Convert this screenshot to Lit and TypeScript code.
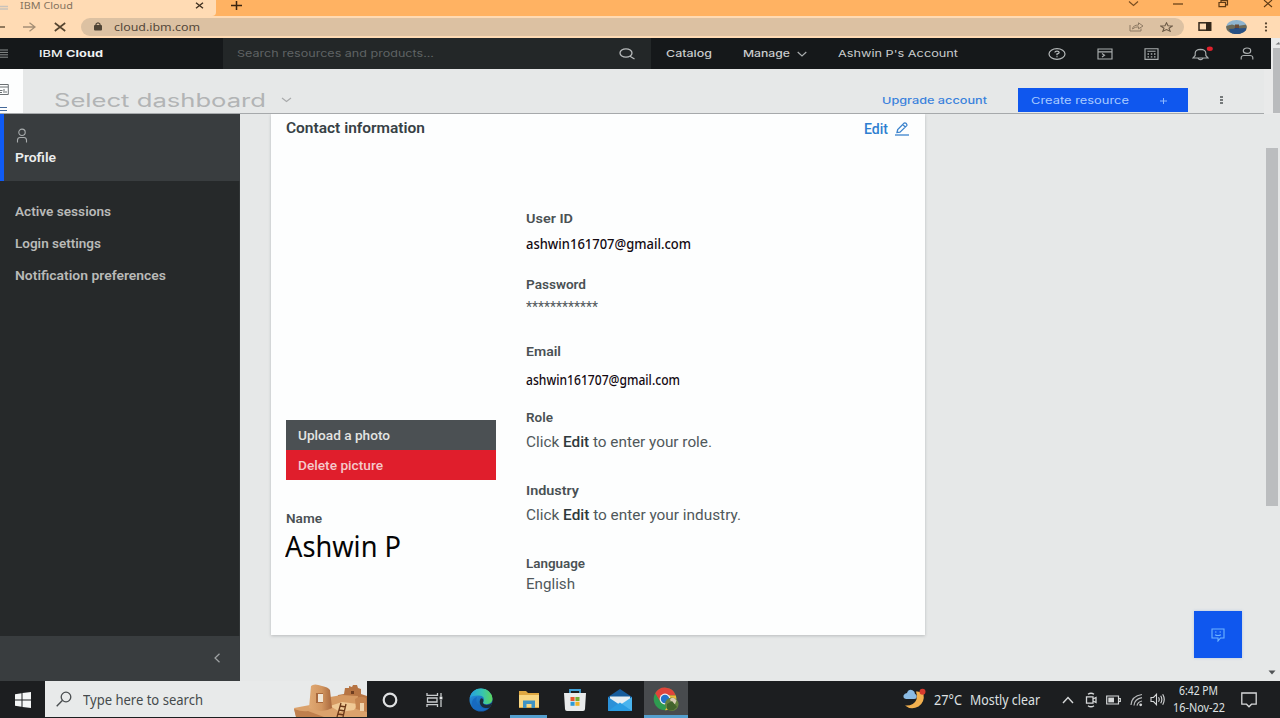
import { LitElement, html, css, svg } from "lit";
import { customElement, property } from "lit/decorators.js";

/** Single line of text whose glyphs are stretched horizontally to a given width. */
@customElement("fit-text")
class FitText extends LitElement {
  @property({ type: Number }) w = 0;
  static styles = css`
    :host { display: block; flex: none; white-space: nowrap; }
    .run { display: inline-block; transform-origin: 0 50%; }
  `;
  render() {
    return html`<span class="run"><slot></slot></span>`;
  }
  firstUpdated() {
    const run = this.renderRoot.querySelector(".run") as HTMLElement;
    const natural = run.getBoundingClientRect().width;
    this.style.width = this.w + "px";
    if (natural) run.style.transform = `scaleX(${this.w / natural})`;
  }
}

const icon = (w: number, h: number, body: unknown, box = `0 0 ${w} ${h}`) =>
  html`<svg class="ic" width=${w} height=${h} viewBox=${box} preserveAspectRatio="none">${body}</svg>`;

@customElement("browser-bar")
class BrowserBar extends LitElement {
  static styles = css`
    :host { display: block; font-family: "Noto Sans", sans-serif; }
    svg { display: block; flex: none; }
    .tabs { height: 16px; background: #ffb262; display: grid; grid-template-columns: 216px 1fr auto; }
    .tab { background: #ffdbb4; border-radius: 0 0 4px 0; display: grid; grid-template-columns: 20px 175px 1fr; align-items: center; height: 16px; padding-bottom: 6px; box-sizing: border-box; font-size: 9px; line-height: 11px; color: #85735f; }
    .plus { padding: 1px 0 0 15px; }
    .win { display: flex; gap: 34px; padding: 0 7px 0 0; }
    .tools { height: 22px; background: #ffdbb4; display: grid; grid-template-columns: 20px 34px 27px 1103px 14px 1fr; align-items: center; padding-bottom: 1px; box-sizing: border-box; }
    .omni { height: 18px; border-radius: 9px; background: #dcc1a2; display: grid; grid-template-columns: 13px 20px 1fr 17px 14px 17px 7px; align-items: center; color: #55483a; font-size: 10px; line-height: 14px; }
    .end { display: grid; grid-template-columns: 28px 38px 1fr; align-items: center; }
  `;
  render() {
    return html`
      <div class="tabs">
        <div class="tab">
          ${icon(12, 9, svg`<path d="M0 8H8M0 5.5H8" stroke="#c9c3bb" stroke-width="1.6"/>`)}
          <fit-text w="53">IBM Cloud</fit-text>
          ${icon(9, 7, svg`<path d="M1 .8L8 6.2M8 .8L1 6.2" stroke="#3f3021" stroke-width="1.4"/>`)}
        </div>
        <div class="plus">${icon(11, 9, svg`<path d="M5.5 0V9M0 4.5H11" stroke="#3a2410" stroke-width="1.5"/>`)}</div>
        <div class="win">
          ${icon(12, 9, svg`<path d="M2 1.5L6.5 5.5L11 1.5" fill="none" stroke="#7a4e20" stroke-width="1.2"/>`)}
          ${icon(11, 9, svg`<path d="M0 4H10" stroke="#5e3a14" stroke-width="1.2"/>`)}
          ${icon(11, 9, svg`<path d="M1 2.5H7.5V6.7H1ZM3 2V.6H9.5V4.8H8" fill="none" stroke="#5e3a14" stroke-width="1.2"/>`)}
          ${icon(10, 9, svg`<path d="M1 0L9 7M9 0L1 7" stroke="#5e3a14" stroke-width="1.1"/>`)}
        </div>
      </div>
      <div class="tools">
        ${icon(6, 8, svg`<path d="M0 4H5" stroke="#55442f" stroke-width="1.3"/>`)}
        ${icon(16, 10, svg`<path d="M3 5H15M9.5 .8L15 5L9.5 9.2" fill="none" stroke="#a58f75" stroke-width="1.3"/>`)}
        ${icon(12, 10, svg`<path d="M.8 1L11.2 9M11.2 1L.8 9" stroke="#55442f" stroke-width="1.6"/>`)}
        <div class="omni">
          <span></span>
          ${icon(8, 9, svg`<rect y="3" width="8" height="5.6" rx="1" fill="#4f4436"/><path d="M2 3.5V2.2Q4-.6 6 2.2V3.5" fill="none" stroke="#4f4436" stroke-width="1.2"/>`)}
          <fit-text w="86">cloud.ibm.com</fit-text>
          ${icon(15, 10, svg`<path d="M1 3V9H12V6.5M3.5 7Q4 3 9.5 3V.8L14 4L9.5 6.8V4.8Q6 4.7 3.5 7Z" fill="none" stroke="#8f7b64" stroke-width="1"/>`)}
          <span></span>
          ${icon(13, 10, svg`<path d="M6.5 .8L8 3.8L12.3 4L9 6.2L10.2 9.3L6.5 7.6L2.8 9.3L4 6.2L.7 4L5 3.8Z" fill="none" stroke="#6e5c48" stroke-width="1.1"/>`)}
        </div>
        <span></span>
        <div class="end">
          ${icon(14, 9, svg`<rect x="1" y=".8" width="11.5" height="7.4" fill="none" stroke="#33271a" stroke-width="1.5"/><rect x="8" width="5.3" height="9" fill="#33271a"/>`)}
          ${icon(21, 14, svg`<defs><clipPath id="av"><ellipse cx="10.5" cy="7" rx="10.4" ry="7"/></clipPath></defs><g clip-path="url(#av)"><rect width="21" height="14" fill="#8fb4cf"/><path d="M0 6L6 4.5L11 6L21 4.5V14H0Z" fill="#6d6a58"/><path d="M8 14Q7 8 11 5.5Q14 8 14 14Z" fill="#243e7c"/><path d="M3 9L20 8V14H5Z" fill="#285084"/><path d="M9 4.5H13V8H9Z" fill="#6b4a35"/></g>`)}
          ${icon(4, 10, svg`<circle cx="2" cy="1.4" r="1.1" fill="#55442f"/><circle cx="2" cy="5" r="1.1" fill="#55442f"/><circle cx="2" cy="8.6" r="1.1" fill="#55442f"/>`)}
        </div>
      </div>
    `;
  }
}

@customElement("cloud-header")
class CloudHeader extends LitElement {
  static styles = css`
    :host { display: grid; grid-template-columns: 1271px 1fr; height: 76px; font-family: "Inter", sans-serif; background: #e9eaea; }
    svg { display: block; flex: none; }
    .nav { height: 31px; background: #15181a; display: grid; grid-template-columns: 39px 184px 428px 15px 77px 54px 41px 210px 49px 47px 48px 48px 1fr; align-items: center; font-size: 9.5px; line-height: 14px; color: #c9cccd; }
    .brand { color: #f0f2f2; font-weight: 500; }
    .brand b { font-weight: 700; }
    .search { height: 31px; background: #232728; display: grid; grid-template-columns: 14px 382px 1fr; align-items: center; color: #5f6364; }
    .med { font-weight: 500; }
    .dash { height: 45px; background: #e6e8e8; display: grid; grid-template-columns: 23px 31px 227px 601px 136px 170px 31px 1fr; border-bottom: 1px solid #a6a9ab; box-sizing: border-box; width: 1264px; }
    .rail { background: #fdfefe; padding-top: 14px; }
    .title { font-size: 18px; line-height: 22px; color: #b2b4b5; padding-top: 21px; }
    .chev { padding-top: 28px; }
    .up { font-size: 9.5px; line-height: 14px; padding-top: 25px; color: #3b82dc; font-weight: 500; }
    .create { margin-top: 19px; height: 24px; background: #0f57ee; color: #a9cbff; display: grid; grid-template-columns: 13px 129px 1fr; align-items: center; font-size: 9.5px; line-height: 14px; padding-top: 1px; box-sizing: border-box; }
    .dots { padding-top: 27px; }
    .scroll { display: grid; grid-template-rows: 10px 65px; }
    .thumb { background: #b9bbbd; margin-left: 2px; }
  `;
  render() {
    const s = (d: string) => svg`<path d=${d} fill="none" stroke="#a9adae" stroke-width="1.15"/>`;
    return html`
      <div>
        <div class="nav">
          ${icon(8, 9, svg`<path d="M0 1H8M0 3.4H8M0 5.8H8M0 8.2H8" stroke="#8a8e8f" stroke-width="1"/>`)}
          <fit-text class="brand" w="64">IBM <b>Cloud</b></fit-text>
          <div class="search">
            <span></span>
            <fit-text w="197">Search resources and products...</fit-text>
            ${icon(16, 12, svg`<ellipse cx="7" cy="5" rx="6" ry="4.2" fill="none" stroke="#b7babb" stroke-width="1.3"/><path d="M11 8.3L15.5 11" stroke="#b7babb" stroke-width="1.3"/>`)}
          </div>
          <span></span>
          <fit-text class="med" w="46">Catalog</fit-text>
          <fit-text class="med" w="47">Manage</fit-text>
          ${icon(10, 6, s("M.7 1L5 5L9.3 1"))}
          <fit-text w="120">Ashwin P's Account</fit-text>
          ${icon(18, 12, svg`<ellipse cx="9" cy="6" rx="8" ry="5.3" fill="none" stroke="#b4b8b9" stroke-width="1.2"/><path d="M6.8 4.5Q7 3.2 9 3.2T11.2 4.6Q11.2 5.7 9 6V7.2M9 8.2V9.2" fill="none" stroke="#b4b8b9" stroke-width="1.3"/>`)}
          ${icon(16, 12, s("M1 1H15V11H1ZM1 3.8H15M5 5.5L7.5 7.2L5 9"))}
          ${icon(15, 12, svg`${s("M1 .7H14V11.3H1ZM3.4 3.2H11.6")}<path d="M3.5 6H5M6.8 6H8.3M10 6H11.5M3.5 8.9H5M6.8 8.9H8.3M10 8.9H11.5" stroke="#a9adae" stroke-width="1.3"/>`)}
          ${icon(22, 16, svg`<path d="M1 12H16L13.8 9.5V7Q13.6 3.6 8.5 3.4Q3.4 3.6 3.2 7V9.5ZM6 12.3Q8.5 15 11 12.3" fill="none" stroke="#a9adae" stroke-width="1.15"/><ellipse cx="17.8" cy="2.8" rx="3" ry="2.2" fill="#e0202c"/>`)}
          ${icon(14, 13, svg`<ellipse cx="7" cy="3.7" rx="3.7" ry="2.7" fill="none" stroke="#a9adae" stroke-width="1.2"/>${s("M1.2 12.5V10.5Q1.4 8.5 4 8.5H10Q12.6 8.5 12.8 10.5V12.5")}`)}
        </div>
        <div class="dash">
          <div class="rail">${icon(9, 28, svg`<path d="M0 1.5H8.3V11.5H0M0 4H8M0 7.5H2.5M0 9.5H2M4 6V10M6 8V10" fill="none" stroke="#6b7073" stroke-width="1"/><path d="M0 24.5H7M0 27.5H7" stroke="#44699a" stroke-width="1"/>`)}</div>
          <span></span>
          <div class="title"><fit-text w="212">Select dashboard</fit-text></div>
          <div class="chev">${icon(11, 6, svg`<path d="M1 1L5.5 4.5L10 1" fill="none" stroke="#a9abac" stroke-width="1.2"/>`)}</div>
          <div class="up"><fit-text w="105">Upgrade account</fit-text></div>
          <div class="create"><span></span><fit-text w="98">Create resource</fit-text>${icon(7, 6, svg`<path d="M3.5 0V6M0 3H7" stroke="#8cb8ff" stroke-width="1"/>`)}</div>
          <span></span>
          <div class="dots">${icon(5, 8, svg`<path d="M1 1H4M1 4H4M1 7H4" stroke="#505456" stroke-width="1.4"/>`)}</div>
        </div>
      </div>
      <div class="scroll">
        ${icon(9, 10, svg`<path d="M4.5 6.5L8 4L9 6.5Z" fill="#77797a"/>`)}
        <div class="thumb"></div>
      </div>
    `;
  }
}

@customElement("side-nav")
class SideNav extends LitElement {
  static styles = css`
    :host { display: grid; grid-template-rows: 67px 14px 32px 32px 32px 1fr 45px; background: #26292a; color: #b9bab8; font: 600 13.5px/32px "Roboto", sans-serif; box-shadow: inset -1px 0 #313536; }
    svg { display: block; }
    .profile { background: #393d3f; border-left: 4px solid #0f5bf5; padding: 14px 0 0 11px; color: #eceeee; line-height: 18px; box-sizing: border-box; }
    .profile svg { margin: 0 0 5px 1px; }
    .item { padding-left: 15px; }
    .foot { background: #393d3f; padding: 17px 0 0 213px; box-sizing: border-box; }
  `;
  render() {
    return html`
      <div class="profile">
        ${icon(12, 15, svg`<circle cx="6" cy="4.3" r="3.2" fill="none" stroke="#a9adae" stroke-width="1.1"/><path d="M1.5 14.5V12Q1.7 9.5 4 9.5H8Q10.3 9.5 10.5 12V14.5" fill="none" stroke="#a9adae" stroke-width="1.1"/>`)}
        <fit-text w="41">Profile</fit-text>
      </div>
      <span></span>
      <fit-text class="item" w="96">Active sessions</fit-text>
      <fit-text class="item" w="86">Login settings</fit-text>
      <fit-text class="item" w="151">Notification preferences</fit-text>
      <span></span>
      <div class="foot">${icon(8, 10, svg`<path d="M6.5 .7L2 5L6.5 9.3" fill="none" stroke="#a0a4a5" stroke-width="1.2"/>`)}</div>
    `;
  }
}

@customElement("contact-card")
class ContactCard extends LitElement {
  static styles = css`
    :host { display: grid; grid-template-rows: 30px 1fr; background: #fdfefe; height: 521px; box-sizing: border-box; padding: 0 15px; box-shadow: 0 1px 3px #b9bcbd; font-family: "Roboto", sans-serif; color: #3c4447; clip-path: inset(0 -6px -6px -6px); }
    svg { display: block; }
    .head { display: grid; grid-template-columns: 578px 31px 1fr; align-items: center; font-size: 14.5px; font-weight: 600; color: #374145; padding-bottom: 1px; }
    .edit { color: #2f7fd0; font-weight: 500; font-size: 14px; }
    .cols { display: grid; grid-template-columns: 210px 1fr; column-gap: 30px; }
    .left { padding-top: 276px; }
    .btn { height: 30px; line-height: 30px; background: #4b5053; color: #e3e4e2; font-size: 13.5px; font-weight: 500; padding-left: 12px; box-sizing: border-box; }
    .del { background: #e01e2c; color: #f4c9cb; }
    .label { font-size: 13.3px; font-weight: 600; line-height: 20px; color: #4a5154; }
    .name { font: 28.5px/34px "Noto Sans", sans-serif; color: #050505; margin-left: -1px; }
    .namelabel { padding-top: 29px; }
    .right { padding-top: 65px; display: grid; align-content: start; grid-template-rows: 66px 67px 66px 73px 73px 40px; }
    .field { display: grid; align-content: start; align-items: center; font-size: 15px; color: #50585b; }
    .field b { font-weight: 500; color: #2f393c; }
    .uid { grid-template-rows: 20px 28px; }
    .pwd { grid-template-rows: 20px 24px; }
    .mail { grid-template-rows: 20px 33px; }
    .role { grid-template-rows: 20px 27px; }
    .lang { grid-template-rows: 20px 20px; }
    .addr { font: 500 14.5px/20px "Noto Sans", sans-serif; color: #140a12; }
  `;
  render() {
    return html`
      <div class="head">
        <fit-text w="139">Contact information</fit-text>
        <fit-text class="edit" w="24">Edit</fit-text>
        ${icon(14, 14, svg`<path d="M0 13H14" stroke="#3c83cc" stroke-width="1.3"/><path d="M2 10.5L2.7 7.6L9.2 1.1Q10.2.6 11.3 1.6Q12.3 2.7 11.7 3.6L5 10.1ZM7.8 2.6L10.3 5" fill="none" stroke="#3c83cc" stroke-width="1.3"/>`)}
      </div>
      <div class="cols">
        <div class="left">
          <div class="btn"><fit-text w="92">Upload a photo</fit-text></div>
          <div class="btn del"><fit-text w="85">Delete picture</fit-text></div>
          <div class="label namelabel"><fit-text w="36">Name</fit-text></div>
          <fit-text class="name" w="116">Ashwin P</fit-text>
        </div>
        <div class="right">
          <div class="field uid"><fit-text class="label" w="47">User ID</fit-text><fit-text class="addr" w="165">ashwin161707@gmail.com</fit-text></div>
          <div class="field pwd"><fit-text class="label" w="60">Password</fit-text><fit-text w="72">************</fit-text></div>
          <div class="field mail"><fit-text class="label" w="35">Email</fit-text><fit-text class="addr" w="154">ashwin161707@gmail.com</fit-text></div>
          <div class="field role"><fit-text class="label" w="27">Role</fit-text><fit-text w="186">Click <b>Edit</b> to enter your role.</fit-text></div>
          <div class="field role"><fit-text class="label" w="53">Industry</fit-text><fit-text w="215">Click <b>Edit</b> to enter your industry.</fit-text></div>
          <div class="field lang"><fit-text class="label" w="59">Language</fit-text><fit-text w="49">English</fit-text></div>
        </div>
      </div>
    `;
  }
}

@customElement("task-bar")
class TaskBar extends LitElement {
  static styles = css`
    :host { display: grid; grid-template-columns: 45px 322px 45px 45px 48px 47px 45px 46px 46px 214px 31px 36px 92px 23px 21px 24px 20px 23px 68px 1fr; height: 37px; background: #1c1e20; align-items: center; font: 14px/20px "Noto Sans", sans-serif; color: #dfe1e2; }
    svg { display: block; }
    .c { display: grid; place-items: center; height: 37px; }
    .search { height: 36px; align-self: start; background: #e8eaea; display: grid; grid-template-columns: 11px 27px 211px 73px; align-items: center; color: #454a4c; font-size: 15px; }
    .open { box-shadow: inset 0 -3px #559fce; margin: 0 5px; }
    .active { background: #484b4e; box-shadow: inset 0 -3px #559fce; margin: 0 1px; }
    .clock { font-size: 12px; line-height: 16.5px; }
    .clock .t { padding-left: 6px; }
  `;
  render() {
    const g = "#d6d8d9";
    return html`
      <div class="c">${icon(16, 16, svg`<path d="M0 2.2L6.5 1.2V7.5H0ZM7.5 1L16 0V7.5H7.5ZM0 8.5H6.5V14.8L0 13.8ZM7.5 8.5H16V16L7.5 15Z" fill="#f4f6f6"/>`)}</div>
      <div class="search">
        <span></span>
        ${icon(16, 16, svg`<circle cx="10" cy="6" r="4.8" fill="none" stroke="#4a4e50" stroke-width="1.3"/><path d="M6.3 9.6L.7 15.3" stroke="#4a4e50" stroke-width="1.4"/>`)}
        <fit-text w="120">Type here to search</fit-text>
        ${icon(73, 36, svg`
          <defs><linearGradient id="sand"><stop stop-color="#e0a973"/><stop offset=".55" stop-color="#d29660"/><stop offset="1" stop-color="#a9683d"/></linearGradient></defs>
          <path d="M44 14L50 13L51 7L55 7V5L58 6L59 4L63 4L64 7L67 8L67 13L73 15V36H40Z" fill="#b67443"/>
          <path d="M57 10H60V13H57Z" fill="#6f3d20"/>
          <path d="M36 16L48 14L64 15L62 30L36 30Z" fill="#d69a63"/>
          <path d="M0 27L16 24L36 28L50 24L73 29V36H2Z" fill="#dba26c"/>
          <path d="M36 25L48 21L64 23L60 29L46 31Z" fill="#f0c995"/>
          <path d="M17 5Q20 2 28 5Q34 6 36 9L38 27Q28 33 15 27Z" fill="url(#sand)"/>
          <path d="M22 12H29V22H22Z" fill="#a9693d"/><path d="M24 13H29V21H24Z" fill="#f1e6d6"/>
          <path d="M61 18Q67 14 72 17L73 31L62 28Z" fill="#c5844f"/><path d="M66 22H70V30H66Z" fill="#f0d3ac"/>
          <path d="M0 28Q8 31 14 30L30 36H2Z" fill="#bf7f4d"/>
          <path d="M47 22L43 36M52 23L49 36M46 25L52 26M45 29L51 30M44 33L50 34" stroke="#6a3718" stroke-width="1.3"/>`)}
      </div>
      <div class="c">${icon(16, 16, svg`<circle cx="8" cy="8" r="6.3" fill="none" stroke="#dfe1e2" stroke-width="2.2"/>`)}</div>
      <div class="c">${icon(17, 16, svg`<path d="M1 1V3.4H11.5V1M1 15V12.6H11.5V15M1.5 6H11V10H1.5ZM15 1V4.5M15 8V15" fill="none" stroke="#c9cccd" stroke-width="1.3"/><rect x="13.6" y="4.6" width="2.8" height="2.8" fill="#e6e8e8"/>`)}</div>
      <div class="c">${icon(24, 24, svg`
        <defs><linearGradient id="eg" x1="0" x2="1"><stop stop-color="#259fe0"/><stop offset=".55" stop-color="#36c4b1"/><stop offset="1" stop-color="#5dd65c"/></linearGradient><linearGradient id="eb" y2="1" x2=".6"><stop stop-color="#2b9ee6"/><stop offset="1" stop-color="#1256a8"/></linearGradient></defs>
        <circle cx="12" cy="12" r="11.5" fill="url(#eb)"/>
        <path d="M.7 10Q3 .5 12 .5Q22.5 1 23.5 11Q23.3 16 17.5 16.3Q13 16 14.4 13.4Q16.5 8 10 7.6Q3.5 7.3.7 10Z" fill="url(#eg)"/>
        <path d="M14.4 13.2Q12.8 16.2 17.5 17Q21 17.2 23.4 14.6Q22.5 18.2 20 20.2Q14.2 21 11.5 17Q9.7 13 12 10.3Q14.8 10.3 14.4 13.2Z" fill="#1c2c3a"/>
        <path d="M4 20Q.5 12 8 8.7Q6 15 10.5 18.5Q14.5 21.5 20 19.7Q13 26 4 20Z" fill="#176ac0"/>`)}</div>
      <div class="c open">${icon(22, 19, svg`<path d="M1 1H8L10 3H21V18H1Z" fill="#dfa842"/><path d="M1 5H21V17H1Z" fill="#f9d783"/><path d="M5 18V10.5H17V18H13.5V14H8.5V18Z" fill="#3f93c4"/>`)}</div>
      <div class="c">${icon(24, 24, svg`<path d="M7 6V2H17V6" fill="none" stroke="#41a2d8" stroke-width="1.8"/><path d="M1 5H23L22 21Q22 23 20 23H4Q2 23 2 21Z" fill="#e9ebeb"/><path d="M7.5 9H11.6V13H7.5Z" fill="#e4572e"/><path d="M12.4 9H16.5V13H12.4Z" fill="#72ad34"/><path d="M7.5 13.8H11.6V17.8H7.5Z" fill="#2d9bd6"/><path d="M12.4 13.8H16.5V17.8H12.4Z" fill="#f0b429"/>`)}</div>
      <div class="c">${icon(24, 22, svg`<path d="M0 8L12 0L24 8V22H0Z" fill="#155c9c"/><path d="M2 7.5H22V18H2Z" fill="#e6eef2"/><path d="M0 8L12 16L0 22Z" fill="#2b91d8"/><path d="M24 8L12 16L24 22Z" fill="#49b4ee"/><path d="M0 22L12 13.5L24 22Z" fill="#2a9de3"/>`)}</div>
      <div class="c active">${icon(26, 25, svg`
        <circle cx="12" cy="12" r="11.3" fill="#2f9b50"/>
        <path d="M2.2 6.3A11.3 11.3 0 0 1 22.8 8.5H12L7 14Z" fill="#e0443a"/>
        <path d="M22.8 8.5A11.3 11.3 0 0 1 12 23.3L17 14L15.5 8.5Z" fill="#edbd3a"/>
        <circle cx="12" cy="12" r="5.4" fill="#eef2f4"/><circle cx="12" cy="12" r="4.2" fill="#2572c8"/>
        <circle cx="18.8" cy="17.3" r="6.7" fill="#65823f"/><path d="M17 12Q21 9 23.5 13.5L22 17Q18.5 18 17 12Z" fill="#d9cdb5"/><path d="M14 17L19 14L24 20Q19 26 14 22Z" fill="#42632c"/>`)}</div>
      <span></span>
      ${icon(23, 23, svg`<path d="M20.5 6Q22 14 15.5 18.5Q8 22.5 2 17.5Q11 18 13.5 11.5Q14.5 7 13 3.5Q18 3 20.5 6Z" fill="#f2b04f"/><path d="M3 11Q0 10.5.5 7.5Q1.5 5 4 5Q5.5.8 9.5 2.2Q12 3.5 12 6Q14.3 7 13.5 9.5Q13 11 11 11Z" fill="#8bbbe4"/><circle cx="19.5" cy="3.8" r="3" fill="#d63a2e"/>`)}
      <fit-text w="28">27°C</fit-text>
      <fit-text w="70">Mostly clear</fit-text>
      ${icon(12, 8, svg`<path d="M1 7L6 1.5L11 7" fill="none" stroke=${g} stroke-width="1.4"/>`)}
      ${icon(13, 16, svg`<path d="M3 2.3Q6 .2 9 2.3M3 13.7Q6 15.8 9 13.7M1.5 4.8H8V11.2H1.5ZM8 7L11 5.5V10.5L8 9" fill="none" stroke=${g} stroke-width="1.3"/>`)}
      ${icon(15, 10, svg`<path d="M.7 1H12.5V9H.7ZM13 3.5H14.3V6.5H13" fill="none" stroke=${g} stroke-width="1.2"/><rect x="2.3" y="2.6" width="5.7" height="4.8" fill=${g}/>`)}
      ${icon(13, 14, svg`<path d="M1 12Q1.5 3 12 1.5M4 12.5Q4.5 6 12 4.7M7 12.7Q7.6 9 12 8" fill="none" stroke="#b8babb" stroke-width="1.2"/><circle cx="10.7" cy="11.8" r="1.4" fill=${g}/>`)}
      ${icon(15, 13, svg`<path d="M1 4.5H3.5L6.5 1.3V11.7L3.5 8.5H1ZM8.5 4.3Q10 6.5 8.5 8.7M10.7 2.8Q13 6.5 10.7 10.2M12.7 1.3Q15.8 6.5 12.7 11.7" fill="none" stroke=${g} stroke-width="1.1"/>`)}
      <div class="clock"><fit-text class="t" w="39">6:42 PM</fit-text><fit-text w="52">16-Nov-22</fit-text></div>
      ${icon(16, 16, svg`<path d="M.8 1H15.2V12.2H10.5L8 14.8L5.5 12.2H.8Z" fill="none" stroke=${g} stroke-width="1.3"/>`)}
    `;
  }
}

@customElement("app-root")
class AppRoot extends LitElement {
  static styles = css`
    :host { display: grid; grid-template-columns: 1280px; grid-template-rows: 38px 76px 567px 37px; width: 1280px; height: 718px; overflow: hidden; background: #e6e8e8; }
    .main { display: grid; grid-template-columns: 240px 31px 654px 269px 48px 23px 15px; background: #e6e8e8; }
    .bot { width: 48px; height: 47px; margin-top: 497px; background: #0f57ee; display: grid; place-items: center; box-shadow: 0 0 3px #b9c6e0; }
    .track { display: grid; grid-template-rows: 34px 358px 1fr; }
    .thumb { background: #bbbdbf; width: 12px; margin-left: 1px; }
    .arrow { padding: 164px 0 0 3px; }
    svg { display: block; }
  `;
  render() {
    return html`
      <browser-bar></browser-bar>
      <cloud-header></cloud-header>
      <div class="main">
        <side-nav></side-nav>
        <span></span>
        <contact-card></contact-card>
        <span></span>
        <div class="bot">${icon(14, 14, svg`<path d="M1 1H13V10H9.5L7 13V10H1Z" fill="none" stroke="#6eb4ff" stroke-width="1.1"/><path d="M4 4H5.5M8.5 4H10M4 6.7Q7 8.3 10 6.7" fill="none" stroke="#6eb4ff" stroke-width="1.1"/>`)}</div>
        <span></span>
        <div class="track"><span></span><div class="thumb"></div><div class="arrow">${icon(8, 5, svg`<path d="M.5 .5H7.5L4 4.5Z" fill="#505355"/>`)}</div></div>
      </div>
      <task-bar></task-bar>
    `;
  }
}
